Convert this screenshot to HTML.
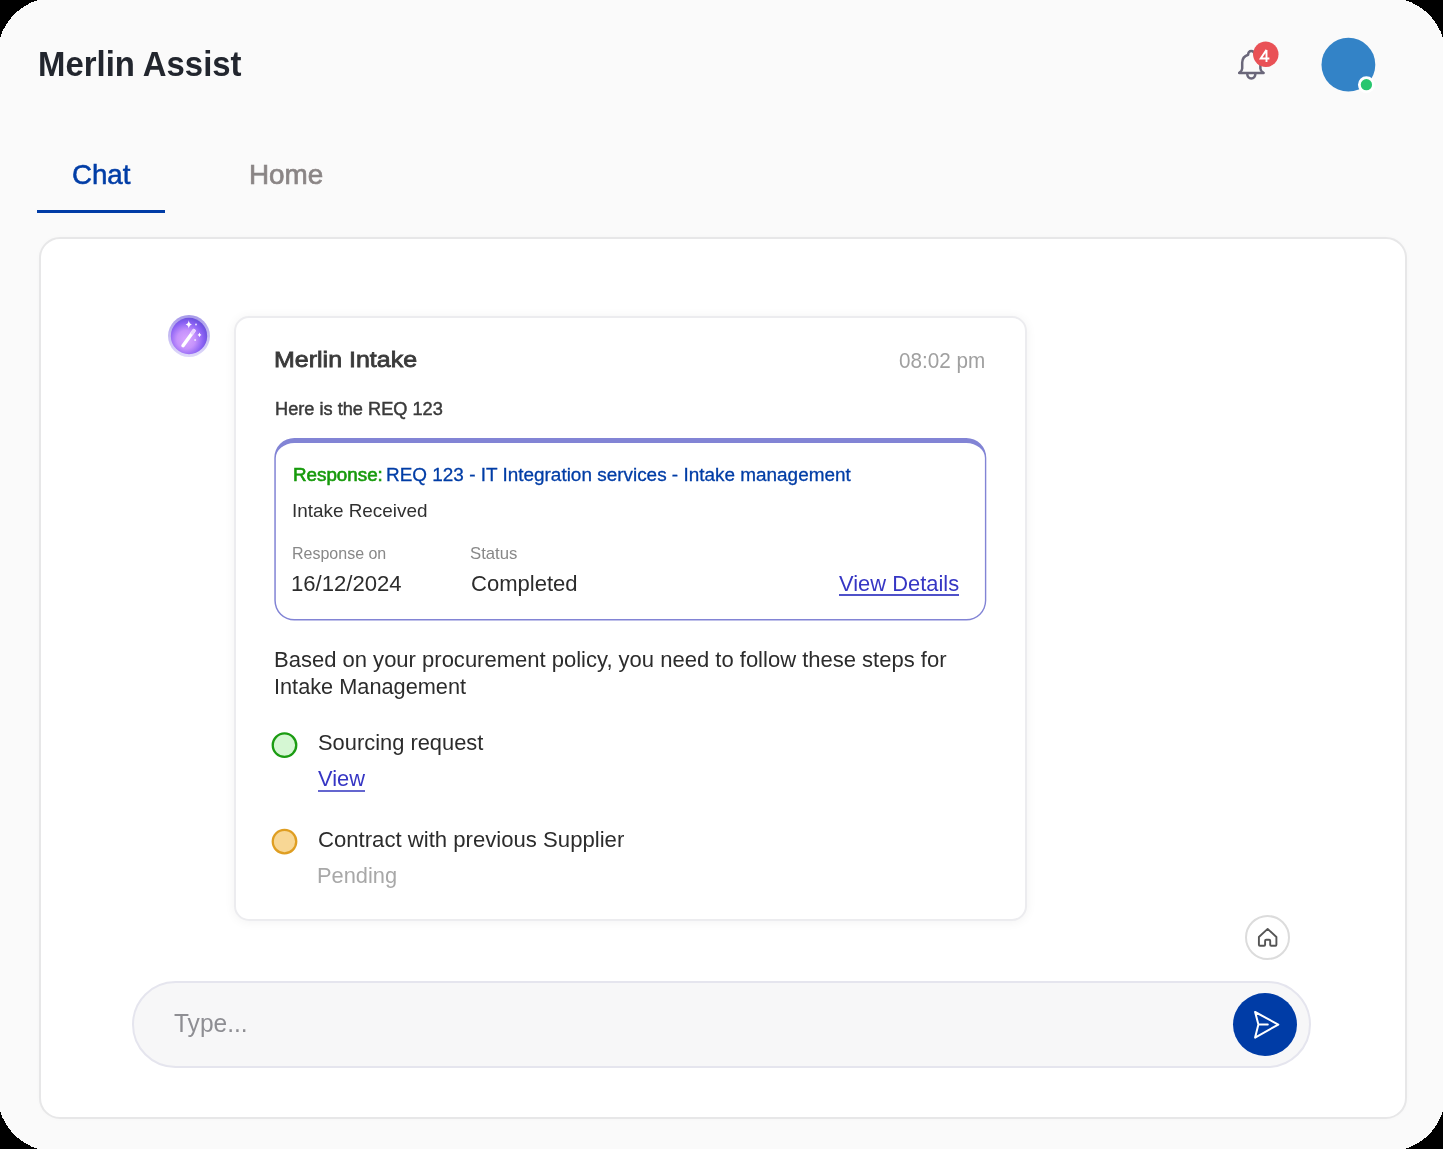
<!DOCTYPE html>
<html>
<head>
<meta charset="utf-8">
<title>Merlin Assist</title>
<style>
  html, body { margin: 0; padding: 0; background: #000; }
  body { width: 1443px; height: 1149px; overflow: hidden; position: relative;
         font-family: "Liberation Sans", sans-serif; }
  .abs { position: absolute; }
  .tx { position: absolute; transform-origin: 0 50%; white-space: nowrap; line-height: 1; color: #333; }
  #page { will-change: transform; position: absolute; left: 0; top: 0; width: 1443px; height: 1149px;
          background: #fafafa; overflow: hidden; }
  #title { left: 38.20px; top: 46.71px; font-size: 34.6px; font-weight: bold; color: #22262e; transform: scaleX(0.9515); }
  #tab-chat { left: 71.70px; top: 161.33px; font-size: 27.9px; color: #003da6; -webkit-text-stroke: 0.55px #003da6; transform: scaleX(0.9915); }
  #tab-home { left: 248.93px; top: 161.33px; font-size: 27.9px; color: #8a8585; -webkit-text-stroke: 0.7px #8a8585; transform: scaleX(0.9980); }
  #t-name { left: 274.45px; top: 349.00px; font-size: 22.6px; color: #3a3a3a; -webkit-text-stroke: 0.8px #3a3a3a; transform: scaleX(1.1061); }
  #t-time { left: 899.00px; top: 350.05px; font-size: 21.2px; color: #a0a0a0; transform: scaleX(0.9767); }
  #t-here { left: 274.70px; top: 401.18px; font-size: 17.6px; color: #3a3a3a; -webkit-text-stroke: 0.45px #3a3a3a; transform: scaleX(1.0339); }
  #t-resp1 { left: 292.50px; top: 465.61px; font-size: 18.3px; color: #179a0c; -webkit-text-stroke: 0.6px #179a0c; transform: scaleX(1.0274); }
  #t-resp2 { left: 386.30px; top: 466.12px; font-size: 18.7px; color: #003da6; -webkit-text-stroke: 0.3px #003da6; transform: scaleX(1.0131); }
  #t-recv { left: 291.81px; top: 501.96px; font-size: 18.6px; color: #303030; transform: scaleX(1.0156); }
  #t-ron { left: 292.30px; top: 545.70px; font-size: 15.9px; color: #888888; transform: scaleX(1.0066); }
  #t-stat { left: 469.70px; top: 545.70px; font-size: 15.9px; color: #888888; transform: scaleX(1.0520); }
  #t-date { left: 291.49px; top: 572.58px; font-size: 22.0px; color: #2c2c2c; transform: scaleX(1.0046); }
  #t-comp { left: 470.50px; top: 572.58px; font-size: 22.0px; color: #2c2c2c; transform: scaleX(1.0022); }
  #t-vd { left: 838.89px; top: 572.58px; font-size: 22.0px; color: #3636c4; transform: scaleX(0.9954); }
  #t-p1 { left: 274.10px; top: 648.58px; font-size: 22.0px; color: #2c2c2c; transform: scaleX(1.0005); }
  #t-p2 { left: 274.02px; top: 675.78px; font-size: 22.0px; color: #2c2c2c; transform: scaleX(0.9876); }
  #t-src { left: 317.70px; top: 731.88px; font-size: 22.0px; color: #2c2c2c; transform: scaleX(0.9944); }
  #t-view { left: 317.89px; top: 767.58px; font-size: 22.0px; color: #3636c4; transform: scaleX(0.9922); }
  #t-con { left: 317.75px; top: 828.78px; font-size: 22.0px; color: #2c2c2c; transform: scaleX(1.0059); }
  #t-pend { left: 317.28px; top: 865.18px; font-size: 22.0px; color: #a8a8a8; transform: scaleX(0.9918); }
  #t-type { left: 173.70px; top: 1009.72px; font-size: 26.2px; color: #8e8e93; transform: scaleX(0.9363); }
  #tab-line { left: 37px; top: 209.5px; width: 128px; height: 3px; background: #003ca6; }
  #panel { left: 39px; top: 237px; width: 1364px; height: 878px; background: #fff;
           border: 2px solid #e7e7e8; border-radius: 21px; box-shadow: 0 0 4px rgba(0,0,0,0.02); }
  #msg { left: 234px; top: 316px; width: 789px; height: 601px; background: #fff;
         border: 2px solid #ececef; border-radius: 15px;
         box-shadow: 0 1px 11px rgba(20,20,40,0.055); }
  /* message texts */
  #u-vd { left: 839px; top: 594px; width: 119.5px; height: 2px; background: #4f51c9; }
  #u-view { left: 318px; top: 790px; width: 47.3px; height: 2px; background: #6466cf; }
  /* input */
  #input { left: 132px; top: 981px; width: 1175px; height: 82.5px; background: #f7f7f8;
           border: 2px solid #e5e5ee; border-radius: 44px; }
  #send { left: 1233px; top: 993.2px; width: 64px; height: 63px; border-radius: 50%; background: #003ca6; }
  #homebtn { left: 1245.3px; top: 915.2px; width: 41px; height: 41px; border-radius: 50%; background: #fff;
             border: 2px solid #dcdcdc; }
  /* header icons */
  svg { position: absolute; overflow: visible; }
</style>
</head>
<body>
<div id="page">


  <div id="tab-line" class="abs"></div>

  <div id="panel" class="abs"></div>

  <!-- merlin avatar -->
  <svg id="wand" style="left:166px;top:313px" width="46" height="46" viewBox="0 0 46 46">
    <defs>
      <radialGradient id="g1" cx="0.42" cy="0.6" r="0.6">
        <stop offset="0" stop-color="#d8a6ff"/>
        <stop offset="0.42" stop-color="#c592fc"/>
        <stop offset="0.78" stop-color="#8b62f4"/>
        <stop offset="1" stop-color="#6e52df"/>
      </radialGradient>
      <linearGradient id="g2" x1="0" y1="0" x2="0" y2="1">
        <stop offset="0" stop-color="#a294e8" stop-opacity="0.95"/>
        <stop offset="1" stop-color="#c9bff6" stop-opacity="0.6"/>
      </linearGradient>
    </defs>
    <circle cx="23" cy="23" r="21" fill="url(#g2)"/>
    <circle cx="23" cy="23" r="18.2" fill="url(#g1)"/>
    <line x1="17" y1="32.7" x2="27.9" y2="17.7" stroke="#fff" stroke-width="3.5" stroke-linecap="round"/>
    <line x1="26.3" y1="19.9" x2="27.9" y2="17.7" stroke="#e9d3ff" stroke-width="3.5" stroke-linecap="round"/>
    <path d="M22.8 7.2 Q23.3 10.9 26 11.4 Q23.3 11.9 22.8 15.6 Q22.3 11.9 19.6 11.4 Q22.3 10.9 22.8 7.2 Z" fill="#fff"/>
    <path d="M33.5 19.6 Q33.8 21.6 35.5 21.9 Q33.8 22.2 33.5 24.2 Q33.2 22.2 31.5 21.9 Q33.2 21.6 33.5 19.6 Z" fill="#fff"/>
    <circle cx="30" cy="11.4" r="1" fill="#fff" opacity="0.8"/>
    <circle cx="29.1" cy="26.9" r="1" fill="#fff" opacity="0.7"/>
  </svg>

  <div id="msg" class="abs"></div>

  <div id="u-vd" class="abs"></div>


  <div id="u-view" class="abs"></div>


  <!-- home button -->
  <div id="homebtn" class="abs"></div>

  <!-- input -->
  <div id="input" class="abs"></div>
  <div id="send" class="abs"></div>
  <div id="title" class="tx">Merlin Assist</div>
  <div id="tab-chat" class="tx">Chat</div>
  <div id="tab-home" class="tx">Home</div>
  <div id="t-name" class="tx">Merlin Intake</div>
  <div id="t-time" class="tx">08:02 pm</div>
  <div id="t-here" class="tx">Here is the REQ 123</div>
  <div id="t-resp1" class="tx">Response:</div>
  <div id="t-resp2" class="tx">REQ 123 - IT Integration services - Intake management</div>
  <div id="t-recv" class="tx">Intake Received</div>
  <div id="t-ron" class="tx">Response on</div>
  <div id="t-stat" class="tx">Status</div>
  <div id="t-date" class="tx">16/12/2024</div>
  <div id="t-comp" class="tx">Completed</div>
  <div id="t-vd" class="tx">View Details</div>
  <div id="t-p1" class="tx">Based on your procurement policy, you need to follow these steps for</div>
  <div id="t-p2" class="tx">Intake Management</div>
  <div id="t-src" class="tx">Sourcing request</div>
  <div id="t-view" class="tx">View</div>
  <div id="t-con" class="tx">Contract with previous Supplier</div>
  <div id="t-pend" class="tx">Pending</div>
  <div id="t-type" class="tx">Type...</div>
  <!-- icon overlay in page coordinates -->
  <svg id="icons" style="left:0;top:0" width="1443" height="1149" viewBox="0 0 1443 1149">
    <!-- page corners -->
    <g fill="#000" shape-rendering="crispEdges">
      <path d="M0 38.24 A57 57 0 0 1 38.24 0 L0 0 Z"/>
      <path d="M1404.76 0 A57 57 0 0 1 1443 38.24 L1443 0 Z"/>
      <path d="M1443 1110.76 A57 57 0 0 1 1404.76 1149 L1443 1149 Z"/>
      <path d="M38.24 1149 A57 57 0 0 1 0 1110.76 L0 1149 Z"/>
    </g>
    <!-- avatar -->
    <circle cx="1348.4" cy="64.65" r="26.9" fill="#3383c7"/>
    <circle cx="1366.4" cy="84.7" r="8.45" fill="#ffffff"/>
    <circle cx="1366.4" cy="84.7" r="5.65" fill="#28c66e"/>
    <!-- bell -->
    <g fill="none" stroke="#6a677a" stroke-width="2.5" stroke-linecap="round" stroke-linejoin="round">
      <path d="M1239.3 72.9 H1263.5"/>
      <path d="M1239.4 72.7 C1241.2 71.4 1242.2 70.4 1242.2 68.4 V62.6 C1242.2 58.6 1244.4 55.9 1248.2 54.7 C1247.9 52.6 1249.4 51 1251.3 51 C1253.2 51 1254.7 52.6 1254.4 54.7 C1258.2 55.9 1260.4 58.6 1260.4 62.6 V68.4 C1260.4 70.4 1261.4 71.4 1263.2 72.7"/>
      <path d="M1247.2 73.6 C1247.2 76.6 1249 78.5 1251.3 78.5 C1253.6 78.5 1255.4 76.6 1255.4 73.6"/>
    </g>
    <circle cx="1265.8" cy="54.3" r="12.7" fill="#e95156"/>
    <path d="M1266.5 49.9 V61.9 M1266.5 49.9 L1260.7 58.5 H1269.4" fill="none" stroke="#fff" stroke-width="1.9" stroke-linejoin="miter"/>
    <!-- inner card frame -->
    <path fill="#8284d5" fill-rule="evenodd" d="M294.3 438.0 H966.3 A20 20 0 0 1 986.3 458.0 V600.6 A20 20 0 0 1 966.3 620.6 H294.3 A20 20 0 0 1 274.3 600.6 V458.0 A20 20 0 0 1 294.3 438.0 Z M294.3 443.0 H966.4 A18.5 15.0 0 0 1 984.9 458.0 V600.6 A18.5 18.5 0 0 1 966.4 619.1 H294.3 A18.5 18.5 0 0 1 275.8 600.6 V458.0 A18.5 15.0 0 0 1 294.3 443.0 Z"/>
    <!-- step dots -->
    <circle cx="284.5" cy="745.2" r="11.75" fill="#d5f7d3" stroke="#1b9c12" stroke-width="2.3"/>
    <circle cx="284.5" cy="841.6" r="11.75" fill="#f8d795" stroke="#df9e22" stroke-width="2.3"/>
    <!-- home icon -->
    <path d="M1258.9 937 L1267.65 928.9 L1276.4 937 V944.8 Q1276.4 945.8 1275.4 945.8 H1271.2 Q1270.2 945.8 1270.2 944.8 V940.8 Q1270.2 939.8 1269.2 939.8 H1266.1 Q1265.1 939.8 1265.1 940.8 V944.8 Q1265.1 945.8 1264.1 945.8 H1259.9 Q1258.9 945.8 1258.9 944.8 Z"
          fill="none" stroke="#555" stroke-width="1.9" stroke-linejoin="round"/>
    <!-- send icon -->
    <path d="M1255.1 1012 L1278.3 1024.55 L1255.1 1037.6 L1258.4 1024.55 Z M1258.4 1024.55 H1267.8"
          fill="none" stroke="#fff" stroke-width="2" stroke-linejoin="round" stroke-linecap="round"/>
  </svg>
</div>
</body>
</html>
